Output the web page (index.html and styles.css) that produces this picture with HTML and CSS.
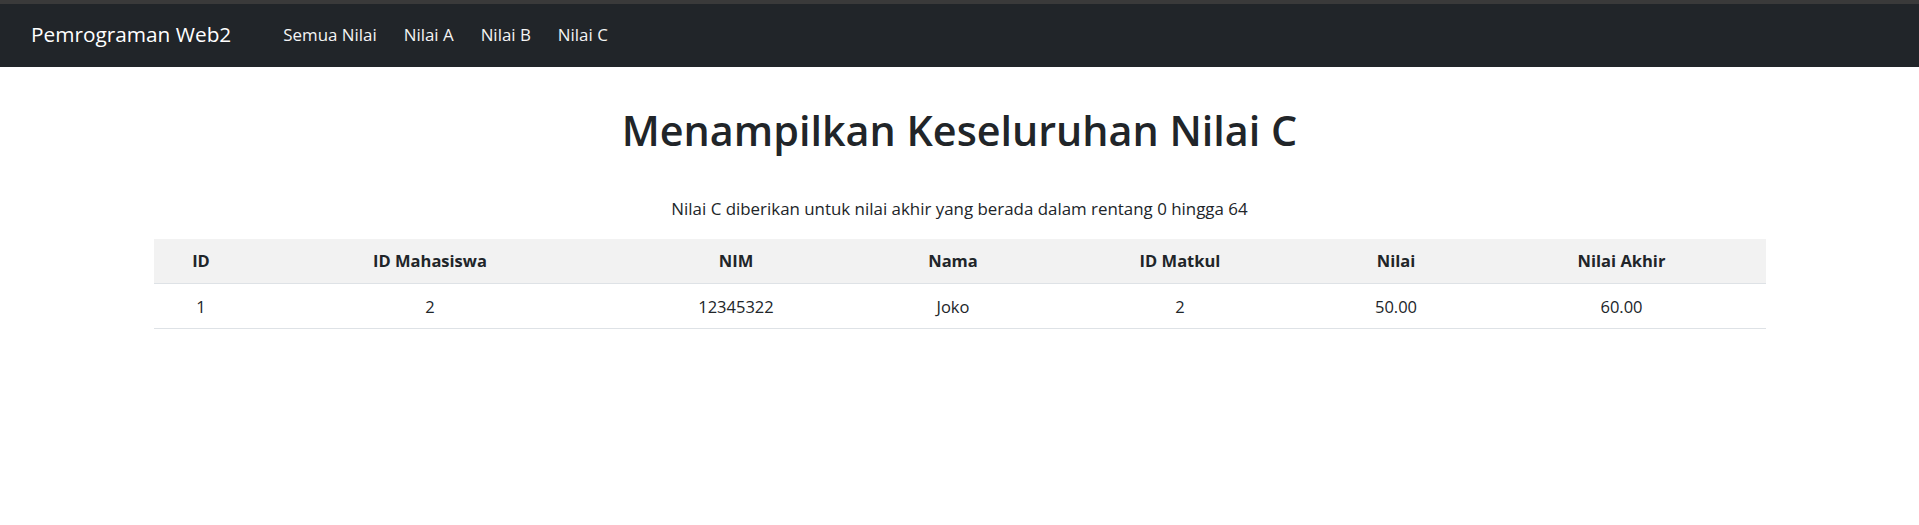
FILE: index.html
```html
<!DOCTYPE html>
<html lang="id">
<head>
<meta charset="utf-8">
<title>Nilai C</title>
<link rel="stylesheet" href="styles.css">
</head>
<body>
<div class="topstrip"></div>
<nav class="navbar">
  <a class="brand" href="#">Pemrograman Web2</a>
  <ul class="nav">
    <li><a href="#">Semua Nilai</a></li>
    <li><a href="#">Nilai A</a></li>
    <li><a href="#">Nilai B</a></li>
    <li><a href="#">Nilai C</a></li>
  </ul>
</nav>
<main class="content">
  <h1 class="title">Menampilkan Keseluruhan Nilai C</h1>
  <p class="lead">Nilai C diberikan untuk nilai akhir yang berada dalam rentang 0 hingga 64</p>
  <table class="grid">
    <colgroup>
      <col class="c1"><col class="c2"><col class="c3"><col class="c4"><col class="c5"><col class="c6"><col class="c7">
    </colgroup>
    <thead>
      <tr><th>ID</th><th>ID Mahasiswa</th><th>NIM</th><th>Nama</th><th>ID Matkul</th><th>Nilai</th><th>Nilai Akhir</th></tr>
    </thead>
    <tbody>
      <tr><td>1</td><td>2</td><td>12345322</td><td>Joko</td><td>2</td><td>50.00</td><td>60.00</td></tr>
    </tbody>
  </table>
</main>
</body>
</html>
```
FILE: styles.css
```css
* { box-sizing: border-box; }
html, body { margin: 0; padding: 0; background: #fff; }
body {
  font-family: "Open Sans", "Noto Sans", sans-serif;
  color: #212529;
  font-size: 17px;
  line-height: 1.5;
}
.topstrip { height: 4px; background: #3a3a3a; }
.navbar {
  height: 63px;
  background: #212529;
  display: flex;
  align-items: center;
  padding-left: 31px;
  padding-bottom: 1px;
}
.brand {
  color: #fff;
  text-decoration: none;
  font-size: 20.8px;
  margin-right: 52px;
}
.nav {
  list-style: none;
  margin: 0;
  padding: 0;
  display: flex;
  gap: 27px;
}
.nav a {
  color: #f4f4f4;
  text-decoration: none;
  font-size: 16.9px;
}
.content { width: 1612px; margin: 0 auto; }
.title {
  margin: 37px 0 0;
  text-align: center;
  font-size: 41.3px;
  font-weight: 600;
  line-height: 52.8px;
}
.lead {
  margin: 39px 0 0;
  text-align: center;
  font-size: 16.9px;
  line-height: 26.4px;
}
.grid {
  margin-top: 17px;
  width: 100%;
  border-collapse: collapse;
  table-layout: fixed;
}
.c1 { width: 95px; } .c2 { width: 363px; } .c3 { width: 249px; }
.c4 { width: 185px; } .c5 { width: 269px; } .c6 { width: 163px; } .c7 { width: 288px; }
.grid th, .grid td {
  text-align: center;
  padding: 8.8px;
  line-height: 26.4px;
  border-bottom: 1px solid #dee2e6;
  font-size: 16.5px;
}
.grid thead th { background: #f2f2f2; font-weight: 700; height: 44px; }
.grid td { height: 45px; padding-top: 10px; padding-bottom: 7.6px; }
```
